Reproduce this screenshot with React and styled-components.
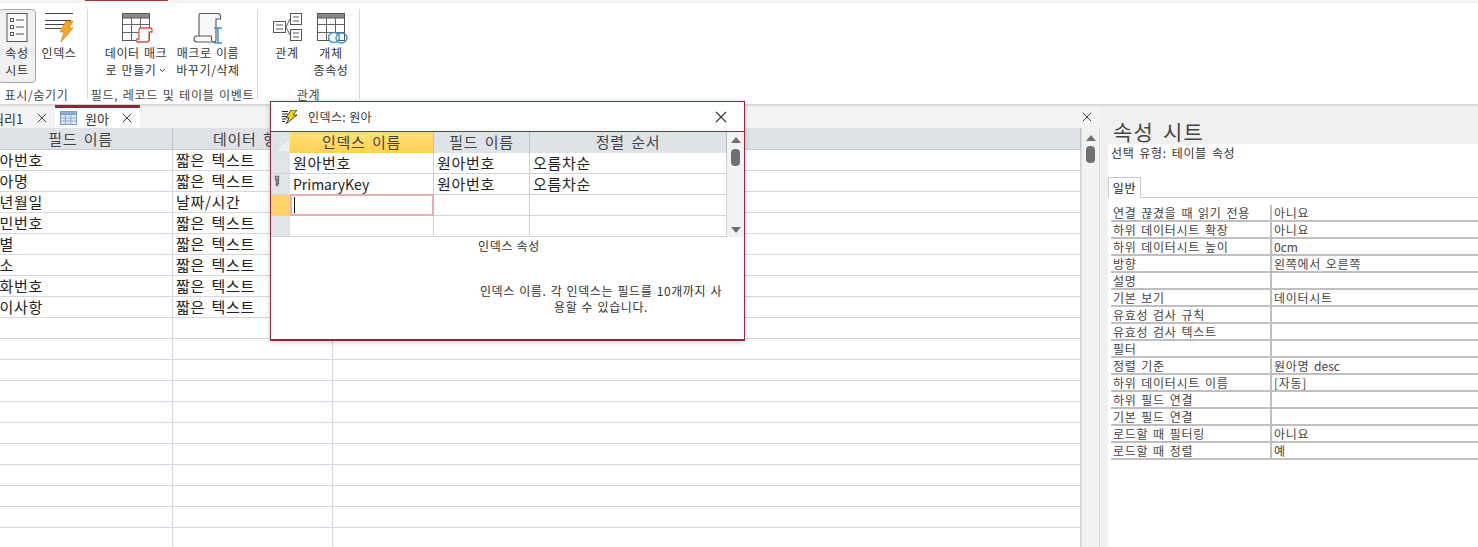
import React from "react";
import styled, { createGlobalStyle } from "styled-components";

const Global = createGlobalStyle`
  html, body { margin: 0; padding: 0; height: 100%; overflow: hidden; background: #fff; }
  body { font-family: "Noto Sans CJK KR", "Noto Sans", sans-serif; color: #333; }
  * { box-sizing: border-box; }
`;

const Page = styled.div`
  position: relative;
  width: 1478px;
  height: 547px;
  overflow: hidden;
  display: flex;
  flex-direction: column;
`;

const TopStrip = styled.div`
  height: 3px;
  flex: none;
  background: #f3f3f3;
  padding-left: 85px;
`;
const ActiveMark = styled.div`
  width: 83px;
  height: 1px;
  background: #a4373a;
`;

const Ribbon = styled.div`
  height: 102px;
  flex: none;
  display: flex;
  padding-top: 6px;
  background: #fff;
  border-bottom: 1px solid #d6d6d6;
  box-shadow: 0 1px 2px rgba(0, 0, 0, 0.1);
  position: relative;
  z-index: 1;
`;
const Group = styled.div`
  width: ${(p) => p.$w}px;
  height: 90px;
  flex: none;
  display: flex;
  flex-direction: column;
  border-right: 1px solid #d8d8d8;
`;
const GroupItems = styled.div`
  height: 74px;
  display: flex;
  padding-left: ${(p) => p.$pad}px;
`;
const GroupLabel = styled.div`
  height: 16px;
  margin-top: 4px;
  font-size: 12px;
  line-height: 16px;
  letter-spacing: 0.7px;
  word-spacing: 1.3px;
  text-align: center;
  color: #444;
  white-space: nowrap;
  padding-right: ${(p) => p.$shift || 0}px;
`;
const RibbonButton = styled.div`
  width: ${(p) => p.$w}px;
  height: 74px;
  flex: none;
  display: flex;
  flex-direction: column;
  align-items: center;
  padding-top: 3px;
  border: 1px solid ${(p) => (p.$active ? "#a8a8a8" : "transparent")};
  border-radius: 4px;
  background: ${(p) => (p.$active ? "#f0f0f0" : "transparent")};
  margin-left: ${(p) => p.$ml || 0}px;
`;
const IconSlot = styled.div`
  height: 31px;
  display: flex;
  align-items: flex-start;
  justify-content: center;
  flex: none;
  padding-left: ${(p) => p.$dx || 0}px;
`;
const ButtonLabel = styled.div`
  font-size: 12px;
  line-height: 17px;
  letter-spacing: 0.6px;
  word-spacing: 1px;
  text-align: center;
  white-space: nowrap;
  color: #333;
`;
const Chevron = styled.svg`
  width: 7px;
  height: 5px;
  margin-left: 3px;
  vertical-align: 2px;
`;

const Workspace = styled.div`
  flex: 1;
  min-height: 0;
  display: flex;
`;
const DocArea = styled.div`
  width: 1100px;
  flex: none;
  display: flex;
  flex-direction: column;
  overflow: hidden;
`;
const TabStrip = styled.div`
  height: 23px;
  flex: none;
  display: flex;
  align-items: stretch;
  background: #f3f3f3;
  position: relative;
`;
const Tab = styled.div`
  width: ${(p) => p.$w}px;
  margin-left: ${(p) => p.$ml || 0}px;
  flex: none;
  display: flex;
  align-items: center;
  gap: 8px;
  padding-left: ${(p) => p.$pl}px;
  font-size: 13px;
  color: #333;
  white-space: nowrap;
  background: ${(p) => (p.$active ? "#fff" : "transparent")};
  border-top: 3px solid ${(p) => (p.$active ? "#8e2a3b" : "transparent")};
`;
const TabClose = styled.svg`
  width: 10px;
  height: 10px;
  margin-left: ${(p) => p.$ml}px;
  flex: none;
`;
const StripClose = styled.svg`
  width: 10px;
  height: 10px;
  margin: 7px 8px 0 auto;
  flex: none;
`;

const SheetRow = styled.div`
  flex: 1;
  min-height: 0;
  display: flex;
`;
const Sheet = styled.div`
  width: 1081px;
  flex: none;
  overflow: hidden;
`;
const SheetGrid = styled.div`
  margin-left: -18px;
  display: grid;
  grid-template-columns: 191px 160px 748px;
  grid-template-rows: 22px;
  grid-auto-rows: 21px;
`;
const HeadCell = styled.div`
  background: #dfe3e8;
  border-right: 1px solid #bcc3cc;
  border-bottom: 1px solid #c8cdd4;
  font-size: 15px;
  line-height: 21px;
  letter-spacing: 0.7px;
  word-spacing: 2.5px;
  text-align: center;
  color: #444;
  white-space: nowrap;
  padding-left: ${(p) => p.$pl || 0}px;
`;
const DataCell = styled.div`
  border-right: 1px solid #d0d6de;
  border-bottom: 1px solid #d3d8de;
  font-size: 15px;
  line-height: 20px;
  letter-spacing: 0.7px;
  word-spacing: 2.5px;
  color: #222;
  white-space: nowrap;
  padding-left: ${(p) => p.$pl}px;
  overflow: hidden;
`;

const ScrollTrack = styled.div`
  width: ${(p) => p.$w}px;
  flex: none;
  background: #f2f2f2;
  border-left: 1px solid ${(p) => (p.$edged ? "#d8d8d8" : "transparent")};
  border-right: 1px solid ${(p) => (p.$edged ? "#d8d8d8" : "transparent")};
  display: flex;
  flex-direction: column;
  align-items: center;
  position: relative;
`;
const ArrowUp = styled.div`
  width: 0;
  height: 0;
  margin-top: ${(p) => p.$mt}px;
  border-left: 5px solid transparent;
  border-right: 5px solid transparent;
  border-bottom: 6px solid #6f6f6f;
`;
const ArrowDown = styled.div`
  width: 0;
  height: 0;
  margin-top: auto;
  margin-bottom: ${(p) => p.$mb}px;
  border-left: 5px solid transparent;
  border-right: 5px solid transparent;
  border-top: 6px solid #6f6f6f;
`;
const Thumb = styled.div`
  width: 9px;
  height: 17px;
  margin-top: ${(p) => p.$mt}px;
  background: #707070;
  border-radius: 4px;
`;

const Panel = styled.aside`
  width: 378px;
  flex: none;
  background: #f0f0f0;
  display: flex;
  flex-direction: column;
  margin-top: -1px;
  padding-left: 1px;
`;
const PanelTitle = styled.div`
  height: 40px;
  flex: none;
  padding: 13px 0 0 12px;
  font-size: 21px;
  line-height: 28px;
  color: #444;
  letter-spacing: 1.2px;
  word-spacing: 3px;
`;
const PanelBody = styled.div`
  flex: 1;
  margin-left: 7px;
  background: #fff;
  min-height: 0;
`;
const SelectionType = styled.div`
  padding-left: 3px;
  height: 33px;
  font-size: 12px;
  line-height: 17px;
  letter-spacing: 0.7px;
  word-spacing: 1.5px;
  color: #333;
`;
const PanelTabs = styled.div`
  height: 21px;
  border-bottom: 1px solid #c8c8c8;
  display: flex;
`;
const PanelTab = styled.div`
  width: 33px;
  height: 21px;
  background: #fff;
  border: 1px solid #c8c8c8;
  border-bottom: none;
  font-size: 12px;
  line-height: 20px;
  letter-spacing: 0.6px;
  text-align: center;
  color: #222;
`;
const PropList = styled.div`
  margin: 7px 0 0 3px;
`;
const PropRow = styled.div`
  height: 17px;
  display: grid;
  grid-template-columns: 161px 1fr;
  border-bottom: 2px solid #bfbfbf;
  font-size: 12px;
  line-height: 15px;
  letter-spacing: 0.7px;
  word-spacing: 1.5px;
  color: #444;
  white-space: nowrap;
`;
const PropLabel = styled.div`
  padding-left: 2px;
  border-right: 2px solid #bfbfbf;
`;
const PropValue = styled.div`
  padding-left: 2px;
`;
const LatinRun = styled.span`
  letter-spacing: 0;
  font-size: ${(p) => p.$size || 12}px;
`;

const Dialog = styled.section`
  position: absolute;
  left: 270px;
  top: 101px;
  width: 475px;
  height: 240px;
  background: #fff;
  border: 1px solid #8e2a3b;
  border-bottom-width: 2px;
  box-shadow: 0 1px 5px rgba(0, 0, 0, 0.22);
  z-index: 5;
  display: flex;
  flex-direction: column;
`;
const DialogTitle = styled.div`
  height: 30px;
  flex: none;
  display: flex;
  align-items: center;
  padding-left: 11px;
  font-size: 12px;
  letter-spacing: 0.4px;
  color: #333;
  border-bottom: 1px solid #8e2a3b;
`;
const DialogTitleText = styled.span`
  margin-left: 10px;
`;
const DialogClose = styled.svg`
  width: 12px;
  height: 12px;
  margin-left: auto;
  margin-right: 17px;
`;
const GridRow = styled.div`
  display: flex;
  height: 105px;
  flex: none;
`;
const DialogGrid = styled.div`
  width: 456px;
  flex: none;
  display: grid;
  grid-template-columns: 19px 144px 96px 197px;
  grid-auto-rows: 21px;
  position: relative;
`;
const Corner = styled.div`
  background: #dfe3e8;
  display: flex;
  align-items: flex-end;
  justify-content: flex-end;
  padding: 0 1px 2px 0;
`;
const CornerMark = styled.div`
  width: 0;
  height: 0;
  border-left: 12px solid transparent;
  border-bottom: 12px solid #eef0f3;
`;
const GridHead = styled.div`
  background: ${(p) => (p.$sel ? "linear-gradient(#ffe27a, #ffd050)" : "#dfe3e8")};
  border-right: 1px solid #b9c0ca;
  font-size: 15px;
  line-height: 20px;
  letter-spacing: 0.7px;
  word-spacing: 2.5px;
  text-align: center;
  color: #444;
  white-space: nowrap;
`;
const Selector = styled.div`
  background: ${(p) => (p.$current ? "#ffd36b" : "#e0e4e9")};
  border-bottom: 1px solid ${(p) => (p.$current ? "#ffd36b" : "#cfd4da")};
  display: flex;
  justify-content: flex-start;
  padding: 1px 0 0 3px;
`;
const GridCell = styled.div`
  border-right: 1px solid #c9d0da;
  border-bottom: 1px solid #cfd4da;
  font-size: 15px;
  line-height: 19px;
  letter-spacing: 0.7px;
  color: #222;
  padding-left: 3px;
  white-space: nowrap;
  position: relative;
`;
const CurrentCell = styled.div`
  position: absolute;
  inset: -1px -1px -1px 0;
  border: 2px solid #e6aeb3;
  padding-left: 2px;
`;
const Caret = styled.div`
  width: 1px;
  height: 16px;
  margin-top: 1px;
  background: #111;
`;
const PropsCaption = styled.div`
  font-size: 12px;
  line-height: 16px;
  letter-spacing: 0.7px;
  margin-top: 1px;
  padding-left: 3px;
  text-align: center;
  color: #333;
  height: 16px;
`;
const HelpText = styled.div`
  width: 250px;
  margin: 29px 0 0 205px;
  font-size: 12px;
  line-height: 16px;
  letter-spacing: 0.6px;
  word-spacing: 1px;
  text-align: center;
  color: #333;
`;

const Cross = ({ as: C, ...p }) => (
  <C viewBox="0 0 12 12" {...p}>
    <path d="M1 1l10 10M11 1L1 11" stroke="#333" strokeWidth="1.1" fill="none" />
  </C>
);

const PropSheetIcon = () => (
  <svg width="22" height="29" viewBox="0 0 22 29">
    <rect x="1" y="0.5" width="20" height="28" fill="#f8f8f8" stroke="#555" />
    <g fill="none" stroke="#555">
      <rect x="4.5" y="5.5" width="3" height="3" />
      <rect x="4.5" y="12.5" width="3" height="3" />
      <rect x="4.5" y="19.5" width="3" height="3" />
      <path d="M10 7h8M10 14h8M10 21h8" />
    </g>
  </svg>
);
const IndexIcon = () => (
  <svg width="30" height="30" viewBox="0 0 30 30">
    <path d="M1 0.5h28M1 7.5h26M1 11.5h20M1 15.5h16" stroke="#444" fill="none" />
    <path d="M22 8h7l-4 7h4L17 29l3-10h-4z" fill="#f5a623" stroke="#c9801a" strokeWidth="0.7" />
  </svg>
);
const TableBase = () => (
  <>
    <rect x="0.5" y="0.5" width="27" height="27" fill="#fff" stroke="#555" />
    <rect x="0.5" y="0.5" width="27" height="4.5" fill="#8a8a8a" stroke="#555" />
    <path d="M9.5 5v22M18.5 5v22M1 11.5h26M1 19.5h26" stroke="#666" fill="none" />
  </>
);
const TableMacroIcon = () => (
  <svg width="32" height="31" viewBox="0 0 32 31">
    <TableBase />
    <path
      d="M18 15h10a2 2 0 0 1 2 2v2h-3v8a2 2 0 0 1-2 2H15a2 2 0 0 1 0-3h2V17a2 2 0 0 1 1-2z"
      fill="#fff"
      stroke="#d9534f"
      strokeWidth="1.3"
    />
  </svg>
);
const RenameIcon = () => (
  <svg width="30" height="31" viewBox="0 0 30 31">
    <path
      d="M7 .5H25a2.5 2.5 0 0 1 2.5 2.5V6H23V27a2 2 0 0 1-2 2H4a3 3 0 0 1 0-6H6V2a1.5 1.5 0 0 1 1-1.5z"
      fill="#f8f8f8"
      stroke="#555"
      strokeWidth="1.1"
    />
    <path d="M21 29a2.5 2.5 0 0 1-2.5-3v-3H6" stroke="#555" strokeWidth="1" fill="none" />
    <path d="M21 15h8M21 30h8M25 15v15" stroke="#3d94c8" strokeWidth="1.5" fill="none" />
  </svg>
);
const RelationIcon = () => (
  <svg width="29" height="28" viewBox="0 0 29 28">
    <g fill="#fff" stroke="#555">
      <rect x="0.5" y="8.5" width="12" height="11" />
      <rect x="17.5" y="0.5" width="11" height="11" />
      <rect x="17.5" y="16.5" width="11" height="11" />
    </g>
    <path d="M3 12h7M3 16h7M20 4h6M20 8h6M20 20h6M20 24h6M13 14l4-8M13 14l4 8" stroke="#555" fill="none" />
  </svg>
);
const ObjectDepsIcon = () => (
  <svg width="32" height="31" viewBox="0 0 32 31">
    <TableBase />
    <g fill="#fff" stroke="#3d94c8" strokeWidth="1.4">
      <ellipse cx="17" cy="24.5" rx="5.5" ry="5" />
      <ellipse cx="24.5" cy="25" rx="5.5" ry="5" fill="none" />
    </g>
  </svg>
);
const TabTableIcon = () => (
  <svg width="17" height="14" viewBox="0 0 17 14">
    <rect x="0.5" y="0.5" width="16" height="13" fill="#dfe8f6" stroke="#7d9cc8" />
    <rect x="0.5" y="0.5" width="16" height="3" fill="#8fadd6" stroke="#7d9cc8" />
    <path d="M5.5 4v9M11 4v9M1 7h15M1 10h15" stroke="#8fadd6" fill="none" />
  </svg>
);
const DialogIcon = () => (
  <svg width="16" height="14" viewBox="0 0 16 14">
    <path d="M0 1.5h6M0 4h6M0 6.5h5M0 9h4M0 11.5h3" stroke="#222" fill="none" />
    <path d="M9 0h6l-4 5h4L4 14l3-6H4z" fill="#f2d21f" stroke="#222" strokeWidth="0.8" />
  </svg>
);
const KeyIcon = () => (
  <svg width="6" height="13" viewBox="0 0 6 13">
    <path d="M1 1h4v4H4v1h1v1H4v1h1v1H4v2H2V5H1z" fill="#777" stroke="#555" strokeWidth="0.4" />
    <rect x="2.3" y="2" width="1.4" height="1.4" fill="#e0e4e9" />
  </svg>
);

const fields = [
  ["원아번호", "짧은 텍스트"],
  ["원아명", "짧은 텍스트"],
  ["생년월일", "날짜/시간"],
  ["주민번호", "짧은 텍스트"],
  ["성별", "짧은 텍스트"],
  ["주소", "짧은 텍스트"],
  ["전화번호", "짧은 텍스트"],
  ["특이사항", "짧은 텍스트"],
];
const sheetRows = Array.from({ length: 19 }, (_, i) => fields[i] || ["", ""]);

const props = [
  ["연결 끊겼을 때 읽기 전용", "아니요"],
  ["하위 데이터시트 확장", "아니요"],
  ["하위 데이터시트 높이", <LatinRun key="h">0cm</LatinRun>],
  ["방향", "왼쪽에서 오른쪽"],
  ["설명", ""],
  ["기본 보기", "데이터시트"],
  ["유효성 검사 규칙", ""],
  ["유효성 검사 텍스트", ""],
  ["필터", ""],
  ["정렬 기준", <React.Fragment key="s">원아명 <LatinRun>desc</LatinRun></React.Fragment>],
  ["하위 데이터시트 이름", "[자동]"],
  ["하위 필드 연결", ""],
  ["기본 필드 연결", ""],
  ["로드할 때 필터링", "아니요"],
  ["로드할 때 정렬", "예"],
];

export default function App() {
  return (
    <Page>
      <Global />
      <TopStrip>
        <ActiveMark />
      </TopStrip>
      <Ribbon>
        <Group $w={88}>
          <GroupItems $pad={0}>
            <RibbonButton $w={38} $ml={-2} $active>
              <IconSlot><PropSheetIcon /></IconSlot>
              <ButtonLabel>속성<br />시트</ButtonLabel>
            </RibbonButton>
            <RibbonButton $w={46}>
              <IconSlot><IndexIcon /></IconSlot>
              <ButtonLabel>인덱스</ButtonLabel>
            </RibbonButton>
          </GroupItems>
          <GroupLabel $shift={14}>표시/숨기기</GroupLabel>
        </Group>
        <Group $w={170}>
          <GroupItems $pad={12}>
            <RibbonButton $w={72}>
              <IconSlot $dx={4}><TableMacroIcon /></IconSlot>
              <ButtonLabel>
                데이터 매크<br />로 만들기
                <Chevron viewBox="0 0 7 5"><path d="M1 1l2.5 2.5L6 1" stroke="#444" fill="none" /></Chevron>
              </ButtonLabel>
            </RibbonButton>
            <RibbonButton $w={72}>
              <IconSlot><RenameIcon /></IconSlot>
              <ButtonLabel>매크로 이름<br />바꾸기/삭제</ButtonLabel>
            </RibbonButton>
          </GroupItems>
          <GroupLabel>필드, 레코드 및 테이블 이벤트</GroupLabel>
        </Group>
        <Group $w={102}>
          <GroupItems $pad={7}>
            <RibbonButton $w={44}>
              <IconSlot><RelationIcon /></IconSlot>
              <ButtonLabel>관계</ButtonLabel>
            </RibbonButton>
            <RibbonButton $w={44}>
              <IconSlot $dx={4}><ObjectDepsIcon /></IconSlot>
              <ButtonLabel>개체<br />종속성</ButtonLabel>
            </RibbonButton>
          </GroupItems>
          <GroupLabel>관계</GroupLabel>
        </Group>
      </Ribbon>
      <Workspace>
        <DocArea>
          <TabStrip>
            <Tab $w={63} $ml={-8} $pl={0}>
              쿼리1
              <Cross as={TabClose} $ml={6} />
            </Tab>
            <Tab $w={85} $pl={5} $active>
              <TabTableIcon />
              원아
              <Cross as={TabClose} $ml={5} />
            </Tab>
            <Cross as={StripClose} />
          </TabStrip>
          <SheetRow>
            <Sheet>
              <SheetGrid>
                <HeadCell $pl={7}>필드 이름</HeadCell>
                <HeadCell>데이터 형식</HeadCell>
                <HeadCell>설명</HeadCell>
                {sheetRows.map(([name, type], i) => (
                  <React.Fragment key={i}>
                    <DataCell $pl={3}>{name}</DataCell>
                    <DataCell $pl={3}>{type}</DataCell>
                    <DataCell $pl={3} />
                  </React.Fragment>
                ))}
              </SheetGrid>
            </Sheet>
            <ScrollTrack $w={19} $edged>
              <ArrowUp $mt={7} />
              <Thumb $mt={5} />
            </ScrollTrack>
          </SheetRow>
        </DocArea>
        <Panel>
          <PanelTitle>속성 시트</PanelTitle>
          <PanelBody>
            <SelectionType>선택 유형: 테이블 속성</SelectionType>
            <PanelTabs>
              <PanelTab>일반</PanelTab>
            </PanelTabs>
            <PropList>
              {props.map(([label, value]) => (
                <PropRow key={label}>
                  <PropLabel>{label}</PropLabel>
                  <PropValue>{value}</PropValue>
                </PropRow>
              ))}
            </PropList>
          </PanelBody>
        </Panel>
      </Workspace>

      <Dialog>
        <DialogTitle>
          <DialogIcon />
          <DialogTitleText>인덱스: 원아</DialogTitleText>
          <Cross as={DialogClose} />
        </DialogTitle>
        <GridRow>
          <DialogGrid>
            <Corner><CornerMark /></Corner>
            <GridHead $sel>인덱스 이름</GridHead>
            <GridHead>필드 이름</GridHead>
            <GridHead>정렬 순서</GridHead>

            <Selector />
            <GridCell>원아번호</GridCell>
            <GridCell>원아번호</GridCell>
            <GridCell>오름차순</GridCell>

            <Selector><KeyIcon /></Selector>
            <GridCell><LatinRun $size={14}>PrimaryKey</LatinRun></GridCell>
            <GridCell>원아번호</GridCell>
            <GridCell>오름차순</GridCell>

            <Selector $current />
            <GridCell>
              <CurrentCell><Caret /></CurrentCell>
            </GridCell>
            <GridCell />
            <GridCell />

            <Selector />
            <GridCell />
            <GridCell />
            <GridCell />
          </DialogGrid>
          <ScrollTrack $w={17}>
            <ArrowUp $mt={5} />
            <Thumb $mt={6} />
            <ArrowDown $mb={4} />
          </ScrollTrack>
        </GridRow>
        <PropsCaption>인덱스 속성</PropsCaption>
        <HelpText>인덱스 이름. 각 인덱스는 필드를 10개까지 사용할 수 있습니다.</HelpText>
      </Dialog>
    </Page>
  );
}
